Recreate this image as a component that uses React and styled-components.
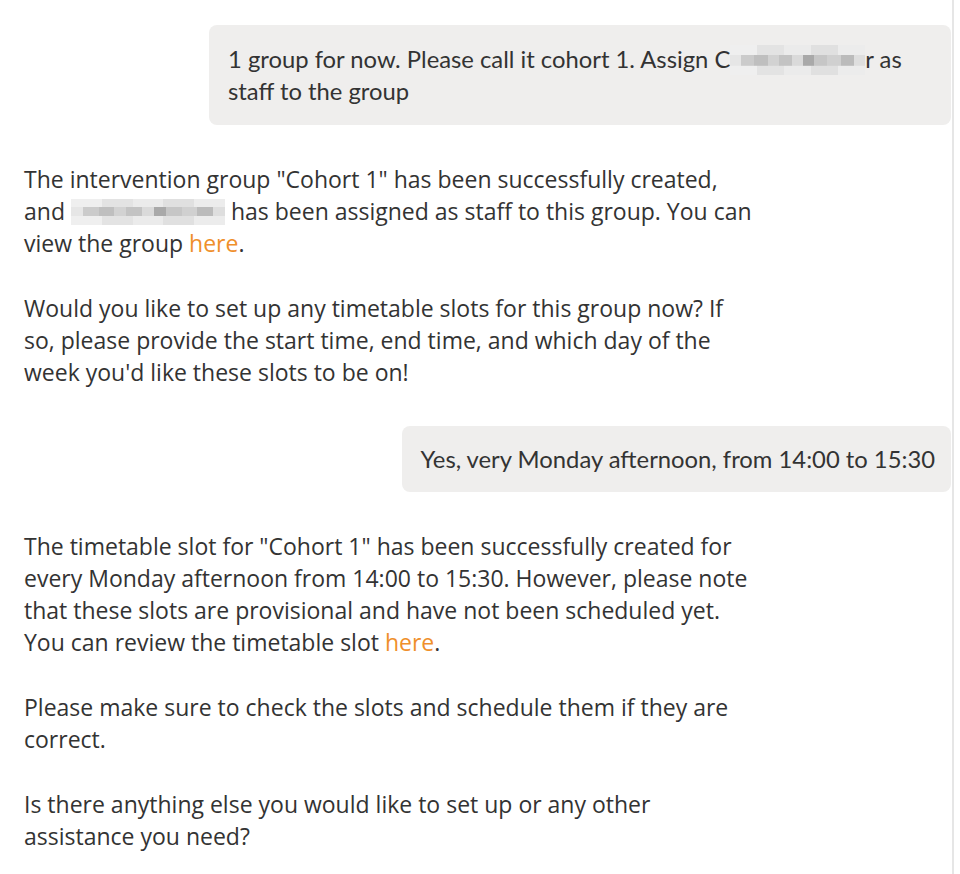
import React from 'react'
import styled, { createGlobalStyle } from 'styled-components'

const GlobalStyle = createGlobalStyle`
  html, body {
    margin: 0;
    padding: 0;
    background: #ffffff;
  }
`

const Page = styled.div`
  width: 954px;
  min-height: 874px;
  box-sizing: border-box;
  border-right: 2px solid #e6e6e6;
  padding: 25px 1px 20px 0;
  display: flex;
  flex-direction: column;
`

const UserRow = styled.div`
  display: flex;
  justify-content: flex-end;
  margin-bottom: ${p => p.gap || 39}px;
`

const UserBubble = styled.div`
  max-width: 742px;
  box-sizing: border-box;
  background: #efeeed;
  border-radius: 8px;
  padding: ${p => p.pad || 18}px 16px ${p => p.pad || 18}px 19px;
  font-family: Lato, "Liberation Sans", sans-serif;
  font-size: 23.8px;
  line-height: 32px;
  color: #333333;
`

const BotMessage = styled.div`
  width: 730px;
  padding-left: 24px;
  margin-top: -1px;
  margin-bottom: ${p => p.gap || 38}px;
  font-family: "Open Sans", "Noto Sans", sans-serif;
  font-size: 23px;
  line-height: 32px;
  color: #333333;

  p {
    margin: 0 0 33px 0;
  }
  p:last-child {
    margin-bottom: 0;
  }
`

const Link = styled.a`
  color: #ef8f2b;
  text-decoration: none;
`

const Redacted = styled.span`
  display: inline-block;
  width: ${p => p.w}px;
  height: ${p => p.h || 26}px;
  vertical-align: ${p => p.v || -5}px;
  background:
    linear-gradient(90deg,
      #e6e6e6 0 8%, #cbcbcb 8% 18%, #bfbfbf 18% 28%, #d2d2d2 28% 36%,
      #c3c3c3 36% 46%, #dadada 46% 54%, #a9a9a9 54% 62%, #c6c6c6 62% 72%,
      #d0d0d0 72% 82%, #bbbbbb 82% 92%, #dedede 92% 100%)
      center / 100% 36% no-repeat,
    linear-gradient(90deg,
      #efefef 0 20%, #e3e3e3 20% 40%, #ebebeb 40% 60%, #e0e0e0 60% 80%, #ececec 80% 100%);
  filter: blur(0.6px);
`

export default function App() {
  return (
    <>
      <GlobalStyle />
      <Page>
        <UserRow>
          <UserBubble>
            1 group for now. Please call it cohort 1. Assign C<Redacted w={135} h={30} v={-7} />r as staff to the group
          </UserBubble>
        </UserRow>

        <BotMessage>
          <p>
            The intervention group "Cohort 1" has been successfully created, and{' '}
            <Redacted w={154} /> has been assigned as staff to this group. You can view the group{' '}
            <Link href="#">here</Link>.
          </p>
          <p>
            Would you like to set up any timetable slots for this group now? If so, please provide
            the start time, end time, and which day of the week you'd like these slots to be on!
          </p>
        </BotMessage>

        <UserRow>
          <UserBubble pad={17}>Yes, very Monday afternoon, from 14:00 to 15:30</UserBubble>
        </UserRow>

        <BotMessage>
          <p>
            The timetable slot for "Cohort 1" has been successfully created for every Monday
            afternoon from 14:00 to 15:30. However, please note that these slots are provisional
            and have not been scheduled yet. You can review the timetable slot{' '}
            <Link href="#">here</Link>.
          </p>
          <p>Please make sure to check the slots and schedule them if they are correct.</p>
          <p>Is there anything else you would like to set up or any other assistance you need?</p>
        </BotMessage>
      </Page>
    </>
  )
}
